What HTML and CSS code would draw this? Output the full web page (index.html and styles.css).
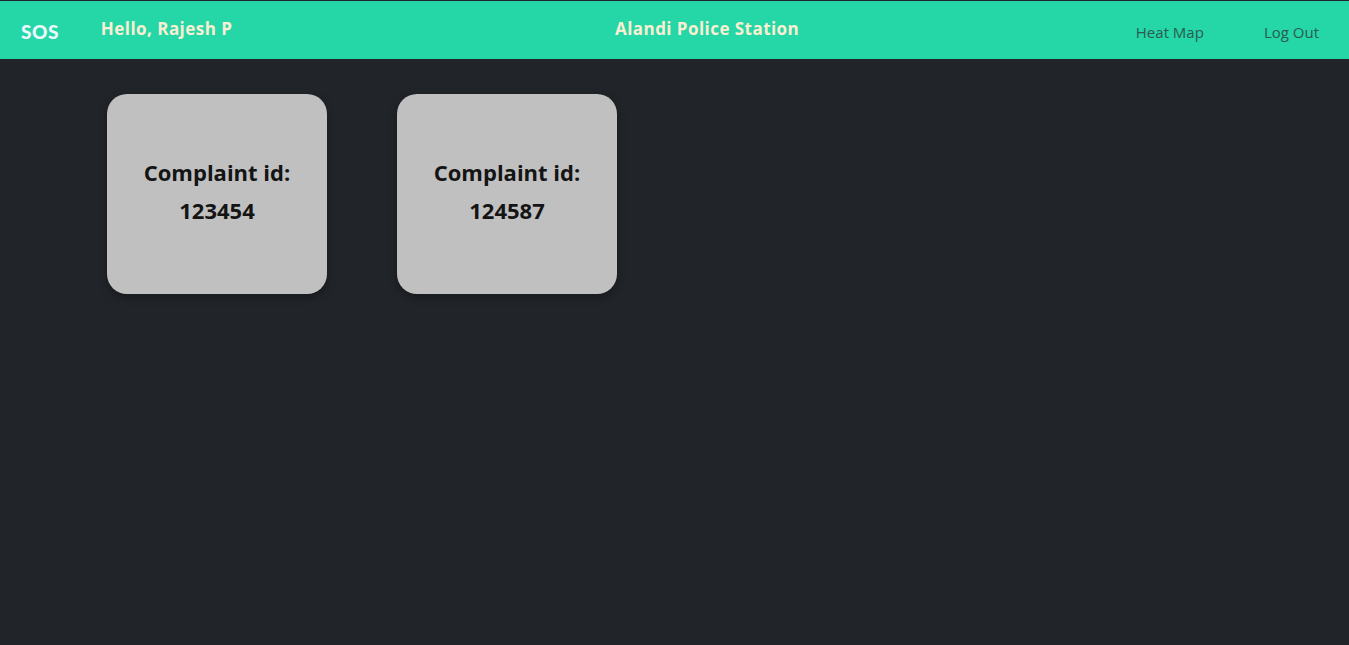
FILE: index.html
```html
<!DOCTYPE html>
<html>
<head>
<meta charset="utf-8">
<link rel="stylesheet" href="styles.css">
</head>
<body>
<header class="navbar">
  <div class="nav-left">
    <span class="brand">SOS</span>
    <span class="greeting">Hello, Rajesh P</span>
  </div>
  <div class="station">Alandi Police Station</div>
  <nav class="nav-links">
    <a class="nav-link" href="#">Heat Map</a>
    <a class="nav-link" href="#">Log Out</a>
  </nav>
</header>
<main class="cards">
  <div class="card">
    <div class="card-label">Complaint id:</div>
    <div class="card-id">123454</div>
  </div>
  <div class="card">
    <div class="card-label">Complaint id:</div>
    <div class="card-id">124587</div>
  </div>
</main>
</body>
</html>
```

FILE: styles.css
```css
* { box-sizing: border-box; }
html, body { margin: 0; padding: 0; }
body {
  background: #212429;
  height: 645px;
  font-family: "Open Sans", sans-serif;
}
.navbar {
  margin-top: 1px;
  height: 58px;
  background: #25d6a6;
  display: flex;
  align-items: center;
  padding: 0 30px 0 21px;
}
.nav-left {
  display: flex;
  align-items: center;
  gap: 42px;
  width: 594px;
}
.brand {
  font-family: "Lato", sans-serif;
  font-weight: 900;
  font-size: 19px;
  letter-spacing: 0.5px;
  color: #eef8ff;
  margin-top: 2px;
}
.greeting, .station {
  font-family: "Open Sans", sans-serif;
  font-weight: 700;
  font-size: 17px;
  letter-spacing: 0.45px;
  color: #fbefd3;
  margin-top: -3px;
  white-space: nowrap;
}
.nav-links {
  flex: 1;
  display: flex;
  justify-content: flex-end;
  gap: 60px;
  margin-top: 3px;
}
.nav-link {
  font-family: "Open Sans", sans-serif;
  font-weight: 400;
  font-size: 15px;
  color: #2c5a52;
  text-decoration: none;
}
.cards {
  display: flex;
  gap: 70px;
  padding: 35px 0 0 107px;
}
.card {
  width: 220px;
  height: 200px;
  background: #c0c0c0;
  border-radius: 20px;
  box-shadow: 0 3px 8px rgba(0,0,0,0.35);
  display: flex;
  flex-direction: column;
  align-items: center;
  justify-content: center;
  font-family: "Open Sans", sans-serif;
  font-weight: 700;
  font-size: 22px;
  color: #141414;
  line-height: 38px;
  padding-bottom: 6px;
}
```
